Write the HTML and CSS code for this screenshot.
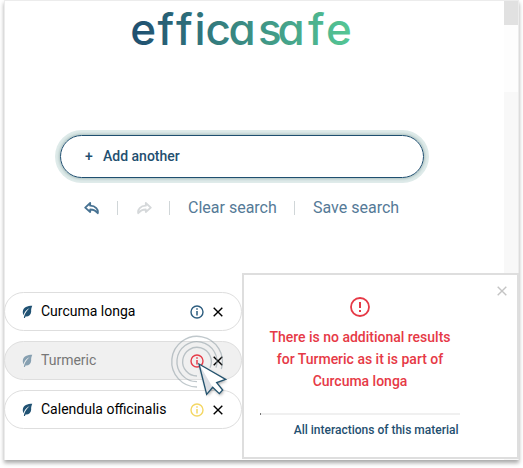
FILE: index.html
```
<!DOCTYPE html>
<html lang="en">
<head>
<meta charset="utf-8">
<title>efficasafe</title>
<link rel="stylesheet" href="styles.css">
</head>
<body>
<svg class="defs" width="0" height="0" aria-hidden="true">
  <symbol id="leaf" viewBox="0 0 12 14"><path d="M11.200.3C6 .4 1.400 2 .9 6.300c-.2 2 .2 3.200 1 4.200C2.200 7.500 4.500 4.500 8.300 2.600 5.300 5.500 3.200 8.500 2.400 11.300L2 13.600h1.200l.6-1.700c3.600.3 5.900-1.800 6.200-5.200C9.700 4 10.600 2 11.200.3z" fill="currentColor"/></symbol>
  <symbol id="info" viewBox="0 0 14 14"><circle cx="7" cy="7" r="6" fill="none" stroke="currentColor" stroke-width="1.400"/><path d="M7 3.300v1.500M7 6v4.500" stroke="currentColor" stroke-width="1.500"/></symbol>
  <symbol id="cross" viewBox="0 0 10 10"><path d="M.7.7l8.600 8.600M9.300.7L.7 9.300" stroke="currentColor" stroke-width="1.400"/></symbol>
  <symbol id="reply" viewBox="0 0 16 13"><path d="M6.200 1L1.200 5.600l5 4.400V7.500c4 0 5.300.8 7.600 3.700.7-3.700-2.200-7.300-7.600-7.500z" fill="none" stroke="currentColor" stroke-width="1.800" stroke-linejoin="round"/></symbol>
</svg>
<main class="window">
  <div class="content">
    <svg class="logo" width="222" height="44" viewBox="0 0 222 44">
      <defs><linearGradient id="brand" gradientUnits="userSpaceOnUse" x1="0" y1="0" x2="221" y2="0"><stop offset="0" stop-color="#1f4e70"/><stop offset="1" stop-color="#55c795"/></linearGradient></defs>
      <text x="-.8 26.500 45 63.500 74.500 97.500 127 146.500 177 195" y="42.500" fill="url(#brand)">efficasafe</text>
    </svg>
    <div class="search"><span class="plus">+</span><span>Add another</span></div>
    <nav class="tools">
      <svg class="reply" width="16" height="13"><use href="#reply"/></svg>
      <i class="sep"></i>
      <svg class="reply redo" width="16" height="13"><use href="#reply"/></svg>
      <i class="sep"></i>
      <span class="tool clear">Clear search</span>
      <i class="sep"></i>
      <span class="tool">Save search</span>
    </nav>
    <ul class="chips">
      <li class="chip"><svg class="leaf"><use href="#leaf"/></svg><span class="name">Curcuma longa</span><svg class="info"><use href="#info"/></svg><svg class="cross"><use href="#cross"/></svg></li>
      <li class="chip muted"><svg class="leaf"><use href="#leaf"/></svg><span class="name">Turmeric</span><svg class="info error"><use href="#info"/></svg><svg class="cross"><use href="#cross"/></svg></li>
      <li class="chip"><svg class="leaf"><use href="#leaf"/></svg><span class="name">Calendula officinalis</span><svg class="info warn"><use href="#info"/></svg><svg class="cross"><use href="#cross"/></svg></li>
    </ul>
  </div>
  <div class="scrollbar"><div class="thumb"></div><div class="gap"></div></div>
</main>
<aside class="popover">
  <svg class="close"><use href="#cross"/></svg>
  <svg class="alert" viewBox="0 0 20 20"><circle cx="10" cy="10" r="9" fill="none" stroke="currentColor" stroke-width="1.800"/><path d="M10 5v6M10 13v2" stroke="currentColor" stroke-width="2"/></svg>
  <p class="message">There is no additional results<br>for Turmeric as it is part of<br>Curcuma longa</p>
  <div class="rule"></div>
  <span class="link">All interactions of this material</span>
</aside>
<svg class="pointer" viewBox="0 0 240 240">
  <g fill="none" stroke="#8d9aa3" stroke-opacity=".55" stroke-width="4">
    <path d="M111 138A43 43 0 1 1 150 113"/>
    <path d="M111 155A60 60 0 1 1 168 113"/>
    <path d="M111 171A76 76 0 1 1 184 117"/>
  </g>
  <path class="arrow" d="M117 102L140 193 158 172 178 191 188 180 170 158 197 148z" fill="#fff"/>
  <path d="M117 102L140 193 158 172z" fill="#dde0e5"/>
  <path d="M117 102L140 193 158 172 178 191 188 180 170 158 197 148z" fill="none" stroke="#24536e" stroke-width="4"/>
</svg>
</body>
</html>
```
FILE: styles.css
```
* { box-sizing: border-box; }
body {
  margin: 0;
  height: 468px;
  overflow: hidden;
  background: #fff;
  font-family: Roboto, "Liberation Sans", sans-serif;
  color: #1f4f70;
}
svg { display: block; flex: none; }
.defs { position: absolute; }
.window {
  display: flex;
  width: 515px;
  height: 460px;
  margin-left: 4px;
  border: 1px solid #ececec;
  border-bottom: 0;
  background: #fff;
  box-shadow: 0 3px 4px rgba(0, 0, 0, .34);
}
.content { width: 499px; }
.logo { margin: 1px 0 0 126px; overflow: visible; }
.logo text {
  font: 500 44px Inter, sans-serif;
  font-feature-settings: "cv11";
}
.search {
  display: flex;
  align-items: center;
  width: 364px;
  height: 43px;
  margin: 89px 0 0 55px;
  padding: 0 0 1px 24px;
  border: 1px solid #1f4f70;
  border-radius: 22px;
  box-shadow: 0 0 3px 1px #a9bfbd, 0 0 0 5px #dfebea;
  font-size: 14px;
  line-height: 16px;
  font-weight: 500;
}
.plus { width: 18px; }
.tools {
  display: flex;
  align-items: center;
  height: 20px;
  margin: 20px 0 0 79px;
}
.reply { color: #477292; }
.redo { color: #d5d8da; transform: scaleX(-1); }
.sep { width: 1px; height: 14px; margin: 0 18px 0 17px; background: #d0d6d8; }
.tool { width: 89px; font-size: 16px; font-weight: 400; line-height: 20px; color: #557a97; white-space: nowrap; }
.chips {
  display: grid;
  gap: 10px;
  margin: 74px 0 0 -1px;
  padding: 0;
  list-style: none;
}
.chip {
  display: flex;
  align-items: center;
  width: 238px;
  height: 39px;
  padding: 0 0 1px 17px;
  border: 1px solid #dedede;
  border-radius: 20px;
  font-size: 14px;
  font-weight: 400;
  color: #000;
}
.leaf { width: 11px; height: 14px; margin-top: 1px; color: #205273; }
.name { width: 157px; flex: none; padding-left: 8px; }
.info { width: 14px; height: 14px; margin: 2px 9px 0 0; color: #2d5d7f; }
.cross { width: 10px; height: 10px; margin-top: 2px; }
.muted { background: #f0f0f0; }
.muted .name { color: #777; }
.muted .leaf { opacity: .5; }
.chip .error { color: #e63c49; }
.chip .warn { color: #f4d763; }
.scrollbar { width: 14px; background: #f8f8f8; }
.thumb { height: 24px; background: #e1e1e1; }
.gap { height: 67px; background: #fdfdfd; }
.popover {
  position: absolute;
  left: 242px;
  top: 273px;
  width: 277px;
  height: 186px;
  padding: 22px 0 0 16px;
  border: 2px solid #dedede;
  background: #fff;
}
.close { width: 10px; height: 10px; position: absolute; right: 10px; top: 11px; margin: 0; color: #c4c4c4; }
.alert { width: 20px; height: 20px; margin-left: 90px; color: #e63946; }
.message {
  width: 200px;
  margin: 9px 0 0;
  font-size: 14px;
  font-weight: 500;
  letter-spacing: -.01px;
  line-height: 22px;
  text-align: center;
  white-space: nowrap;
  color: #e63946;
}
.rule { width: 200px; height: 2px; margin-top: 21px; background: #f0f0f0; border-left: 1px solid #777; }
.link { display: block; width: 200px; margin-top: 7px; padding-right: 1.5px; font-size: 12px; font-weight: 500; line-height: 16px; text-align: right; }
.pointer { position: absolute; left: 160px; top: 330px; width: 80px; height: 80px; overflow: visible; }
.arrow { filter: drop-shadow(3px 5px 4px rgba(0, 0, 0, .35)); }
```
